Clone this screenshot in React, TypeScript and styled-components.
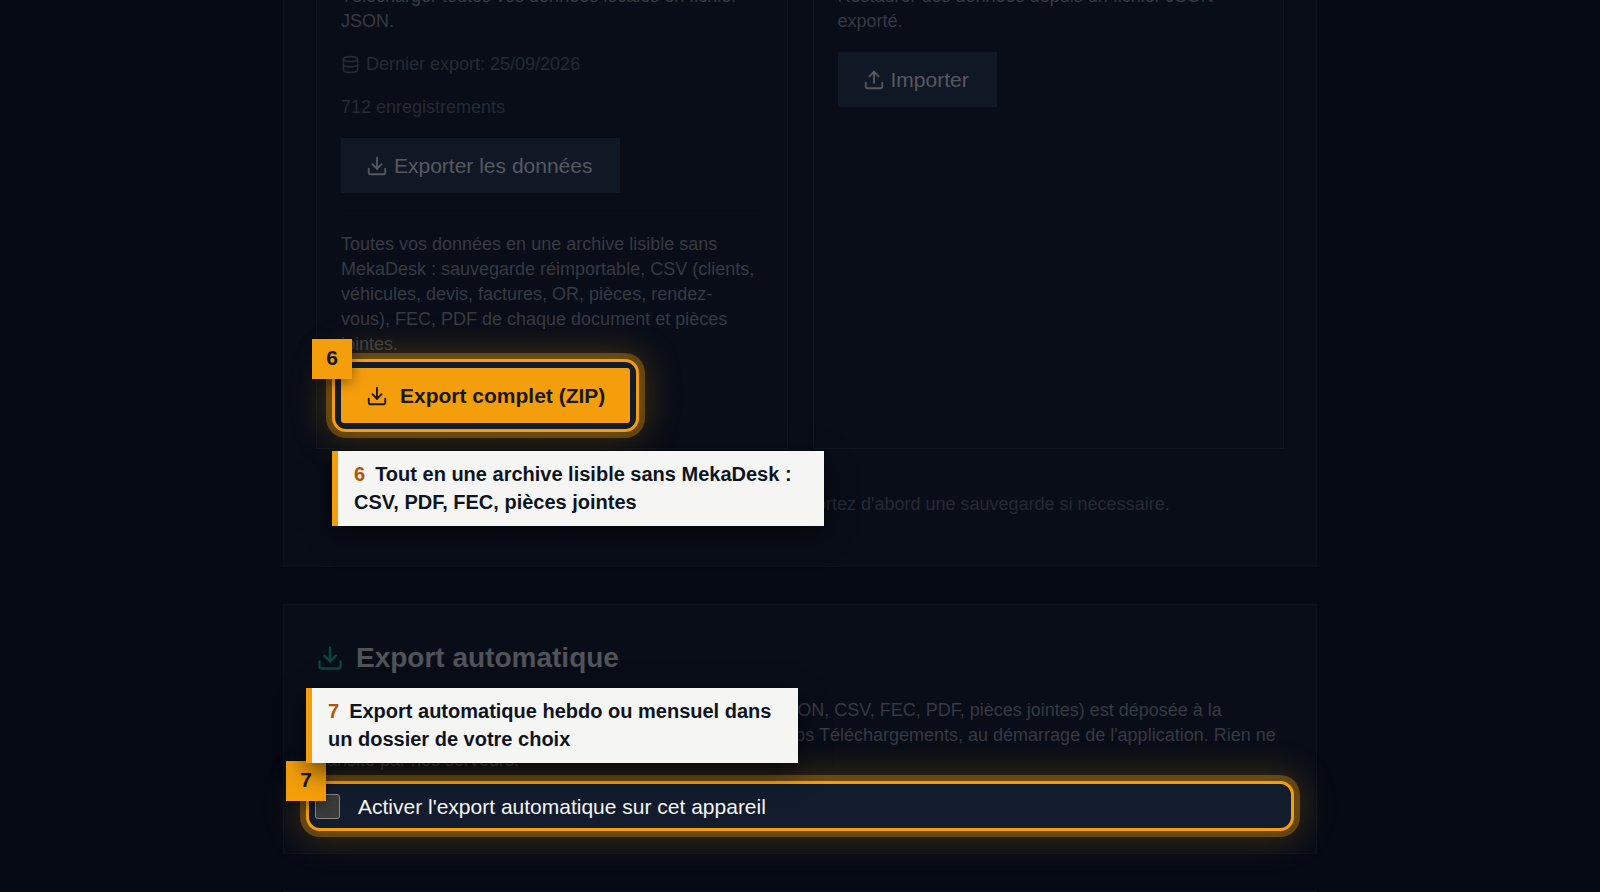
import React from "react";
import styled, { createGlobalStyle } from "styled-components";
import { Database, Download, Upload } from "lucide-react";

const amber = "#f59e0b";

const GlobalStyle = createGlobalStyle`
  *, *::before, *::after { box-sizing: border-box; }
  body {
    margin: 0;
    background: #040914;
    font-family: "Liberation Sans", Arial, sans-serif;
    font-size: 18px;
    line-height: 25px;
    color: #363a42;
  }
  h2, p { margin: 0; }
`;

const Page = styled.main`
  height: 100vh;
  overflow: hidden;
  display: flex;
  flex-direction: column;
  align-items: center;
  gap: 37px;
`;

const Card = styled.section`
  flex: none;
  width: 100%;
  max-width: 1034px;
  padding: 36px 32px 31px;
  background: #080d18;
  border: 1px solid #0c121d;
`;

const ScrolledCard = styled(Card)`
  margin-top: -16px;
  padding-top: 0;
  padding-bottom: 49px;
  border-top: 0;
`;

const Columns = styled.div`
  display: grid;
  grid-template-columns: 1fr 1fr;
  gap: 25px;
`;

const Panel = styled.div`
  display: flex;
  flex-direction: column;
  align-items: flex-start;
  gap: 18px;
  padding: 0 26px 25px 24px;
  border: 1px solid #111620;
  border-top: 0;
`;

const Meta = styled.p`
  display: flex;
  align-items: center;
  gap: 6px;
  color: #262a33;
`;

const Button = styled.button<{ $primary?: boolean }>`
  display: flex;
  align-items: center;
  gap: ${(p) => (p.$primary ? 12 : 6)}px;
  height: 55px;
  padding: ${(p) => (p.$primary ? "0 25px" : "0 27px 0 24px")};
  border: ${(p) => (p.$primary ? "0" : "1px solid #121925")};
  border-radius: ${(p) => (p.$primary ? 3 : 1)}px;
  background: ${(p) => (p.$primary ? amber : "#101725")};
  color: ${(p) => (p.$primary ? "#15181c" : "#565960")};
  font-family: inherit;
  font-size: 21px;
  font-weight: ${(p) => (p.$primary ? 600 : 400)};
`;

const Archive = styled.div`
  align-self: stretch;
  display: flex;
  flex-direction: column;
  align-items: flex-start;
  gap: 11px;
  margin-top: 2px;
  padding-top: 18px;
  border-top: 1px solid #0a101a;
`;

const Note = styled.p`
  margin-top: 43px;
  text-align: center;
  color: #262a33;
`;

const Title = styled.h2`
  display: flex;
  align-items: center;
  gap: 12px;
  margin-bottom: 24px;
  font-size: 28px;
  line-height: 33px;
  color: #505359;

  svg { color: #06483f; }
`;

const Spotlight = styled.div`
  position: relative;

  &::before {
    content: "";
    position: absolute;
    inset: -9px;
    border: 3px solid ${amber};
    border-radius: 14px;
    background: #131c2c;
    box-shadow: 0 0 0 6px rgba(245, 158, 11, 0.32), 0 0 36px 6px rgba(245, 158, 11, 0.25);
  }

  & > * { position: relative; }
`;

const OptionSpotlight = styled(Spotlight)`
  margin: 17px -1px 0;
`;

const Badge = styled.span`
  && {
    position: absolute;
    top: -29px;
    left: -29px;
  }
  width: 40px;
  height: 40px;
  background: ${amber};
  color: #15181c;
  font-size: 21px;
  font-weight: 700;
  line-height: 38px;
  text-align: center;
  box-shadow: 0 4px 12px rgba(0, 0, 0, 0.4);
`;

const Callout = styled.div<{ $above?: boolean }>`
  && {
    position: absolute;
    left: -9px;
    ${(p) => (p.$above ? "bottom: calc(100% + 27px);" : "top: calc(100% + 28px);")}
  }
  z-index: 2;
  width: 492px;
  padding: 9px 16px 10px;
  border-left: 6px solid ${amber};
  background: #f5f5f4;
  color: #0f1422;
  font-size: 20px;
  font-weight: 700;
  line-height: 28px;
  box-shadow: 0 8px 24px rgba(0, 0, 0, 0.6);
`;

const Step = styled.span`
  margin-right: 10px;
  color: #b45309;
`;

const Option = styled.label`
  display: flex;
  align-items: center;
  gap: 18px;
  height: 32px;
  color: #f5f5f4;
  font-size: 21px;
`;

const Checkbox = styled.input`
  appearance: none;
  width: 25px;
  height: 25px;
  margin: 0;
  border: 1px solid #858585;
  border-radius: 3px;
  background: #3b3b3b;
`;

export default function App() {
  return (
    <>
      <GlobalStyle />
      <Page>
        <ScrolledCard>
          <Columns>
            <Panel>
              <p>Télécharger toutes vos données locales en fichier JSON.</p>
              <Meta>
                <Database size={19} />
                Dernier export: 25/09/2026
              </Meta>
              <Meta>712 enregistrements</Meta>
              <Button type="button">
                <Download size={22} />
                Exporter les données
              </Button>
              <Archive>
                <p>
                  Toutes vos données en une archive lisible sans MekaDesk : sauvegarde réimportable, CSV
                  (clients, véhicules, devis, factures, OR, pièces, rendez-vous), FEC, PDF de chaque
                  document et pièces jointes.
                </p>
                <Spotlight>
                  <Button type="button" $primary>
                    <Download size={22} />
                    Export complet (ZIP)
                  </Button>
                  <Badge>6</Badge>
                  <Callout>
                    <Step>6</Step>
                    Tout en une archive lisible sans MekaDesk : CSV, PDF, FEC, pièces jointes
                  </Callout>
                </Spotlight>
              </Archive>
            </Panel>
            <Panel>
              <p>Restaurer des données depuis un fichier JSON exporté.</p>
              <Button type="button">
                <Upload size={22} />
                Importer
              </Button>
            </Panel>
          </Columns>
          <Note>L'importation remplace les données locales. Exportez d'abord une sauvegarde si nécessaire.</Note>
        </ScrolledCard>

        <Card>
          <Title>
            <Download size={28} />
            Export automatique
          </Title>
          <p>
            Chaque semaine ou chaque mois, une archive complète (JSON, CSV, FEC, PDF, pièces jointes) est déposée à la
            fréquence indiquée dans le dossier de votre choix ou dans vos Téléchargements, au démarrage de
            l'application. Rien ne transite par nos serveurs.
          </p>
          <OptionSpotlight>
            <Option>
              <Checkbox type="checkbox" />
              Activer l'export automatique sur cet appareil
            </Option>
            <Badge>7</Badge>
            <Callout $above>
              <Step>7</Step>
              Export automatique hebdo ou mensuel dans un dossier de votre choix
            </Callout>
          </OptionSpotlight>
        </Card>
        <Card />
      </Page>
    </>
  );
}
